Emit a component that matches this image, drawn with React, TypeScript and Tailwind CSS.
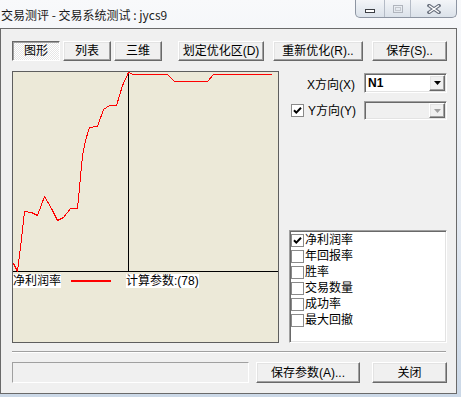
import React from 'react';

const ui = "font-[family-name:'Liberation_Sans','Noto_Sans_CJK_SC',sans-serif] text-[12px] leading-[14px] text-black";
const raised =
  'border border-t-white border-l-white border-r-[#696969] border-b-[#696969] shadow-[inset_-1px_-1px_0_#a0a0a0,inset_1px_1px_0_#e3e3e3] bg-[#f0f0f0]';
const sunken =
  'border border-t-[#a0a0a0] border-l-[#a0a0a0] border-r-white border-b-white shadow-[inset_1px_1px_0_#696969,inset_-1px_-1px_0_#e3e3e3]';

// chart points in window coordinates
const pts: [number, number][] = [
  [13, 263], [17, 271], [20, 247], [24, 211], [31, 212], [37, 215], [44, 196], [51, 208],
  [57, 220], [63, 217], [70, 208], [77, 208], [79, 187], [82, 155], [85, 140], [89, 127],
  [97, 126], [103, 109], [109, 105], [116, 105], [122, 85], [128, 72], [133, 74], [167, 74],
  [174, 81], [207, 81], [213, 74], [271, 74],
];

const metrics = ['净利润率', '年回报率', '胜率', '交易数量', '成功率', '最大回撤'];

function Check() {
  return (
    <svg width="9" height="9" viewBox="0 0 9 9">
      <path d="M1 4.2 L3.3 6.6 L8 1.8" fill="none" stroke="#000" strokeWidth="2" />
    </svg>
  );
}

function Box({ checked }: { checked?: boolean }) {
  return (
    <div className="w-[13px] h-[13px] shrink-0 border border-[#8a8a8a] bg-white flex items-center justify-center">
      {checked && <Check />}
    </div>
  );
}

function Btn({ w, ml, label, pressed }: { w: string; ml: string; label: string; pressed?: boolean }) {
  return (
    <div
      className={`${w} ${ml} h-full flex items-center justify-center ${
        pressed
          ? 'border border-t-[#696969] border-l-[#696969] border-r-white border-b-white shadow-[inset_1px_1px_0_#a0a0a0] bg-[repeating-conic-gradient(#ffffff_0_25%,#e6e6e6_0_50%)] bg-[length:2px_2px]'
          : raised
      }`}
    >
      <span className={ui}>{label}</span>
    </div>
  );
}

function Select({ value, disabled, h }: { value?: string; disabled?: boolean; h: string }) {
  return (
    <div className={`w-[83px] ${h} ${sunken} ${disabled ? 'bg-[#f0f0f0]' : 'bg-white'} flex items-center p-[1px]`}>
      <span className={`${ui} ml-[2px] font-bold flex-1`}>{value}</span>
      <div className={`w-[16px] h-full ${raised} flex items-center justify-center`}>
        <svg width="7" height="4" viewBox="0 0 7 4">
          <path d="M0 0 H7 L3.5 4 Z" fill={disabled ? '#a0a0a0' : '#000'} />
        </svg>
      </div>
    </div>
  );
}

export default function App() {
  const poly = pts.map(([x, y]) => `${x - 13 + 0.5},${y - 72 + 0.5}`).join(' ');

  return (
    <div className="w-[461px] h-[397px] flex flex-col bg-gradient-to-b from-[#f8f9fb] via-[#e6ebf2] to-[#cbd8e7] overflow-hidden">
      {/* title bar */}
      <div className="h-[28px] flex items-start shrink-0">
        <span className="ml-[1px] mt-[8px] font-[family-name:'Noto_Sans_CJK_SC',sans-serif] text-[12px] leading-[14px] text-[#1a1a1a]">
          交易测评 - 交易系统测试 : jycs9
        </span>
        <div className="ml-auto mr-[4px] h-[18px] flex border border-t-0 border-[#8d95a2] rounded-b-[5px] overflow-hidden bg-gradient-to-b from-[#f3f5f8] to-[#dbe2ea]">
          <div className="w-[28px] h-full flex items-end justify-center pb-[4px]">
            <div className="w-[10px] h-[4px] border border-[#3c3f44] bg-white" />
          </div>
          <div className="w-[26px] h-full border-l border-[#b4bbc6] flex items-center justify-center">
            <div className="w-[10px] h-[8px] border border-[#b0b5bd] flex items-center justify-center">
              <div className="w-[6px] h-[4px] border border-[#c4c8ce]" />
            </div>
          </div>
          <div className="w-[46px] h-full border-l border-[#b4bbc6] flex items-center justify-center">
            <svg width="14" height="10" viewBox="0 0 14 10">
              <path d="M2 1.5 L12 8.5 M12 1.5 L2 8.5" stroke="#6c7380" strokeWidth="3.4" strokeLinecap="square" />
              <path d="M2 1.5 L12 8.5 M12 1.5 L2 8.5" stroke="#ffffff" strokeWidth="1.4" />
            </svg>
          </div>
        </div>
      </div>

      {/* client area */}
      <div className="w-[457px] h-[366px] border border-[#6a6a6a] bg-[#f0f0f0] flex flex-col">
        <div className="flex h-[20px] mt-[12px] ml-[11px]">
          <Btn w="w-[48px]" ml="ml-0" label="图形" pressed />
          <Btn w="w-[48px]" ml="ml-[3px]" label="列表" />
          <Btn w="w-[48px]" ml="ml-[3px]" label="三维" />
          <Btn w="w-[86px]" ml="ml-[16px]" label="划定优化区(D)" />
          <Btn w="w-[90px]" ml="ml-[9px]" label="重新优化(R).." />
          <Btn w="w-[75px]" ml="ml-[9px]" label="保存(S).." />
        </div>

        <div className="flex h-[272px] mt-[10px] ml-[11px]">
          {/* chart */}
          <div className="w-[267px] h-full border border-[#5e5e5e] bg-[#ece9d8] flex flex-col">
            <svg width="265" height="200" viewBox="0 0 265 200" shapeRendering="crispEdges" className="block">
              <line x1="115.5" y1="0" x2="115.5" y2="200" stroke="#000" strokeWidth="1" />
              <line x1="0" y1="199.5" x2="265" y2="199.5" stroke="#000" strokeWidth="1" />
              <polyline points={poly} fill="none" stroke="#ff0000" strokeWidth="1" />
            </svg>
            <div className="flex items-center mt-[2px] h-[14px]">
              <span className={`${ui} bg-white`}>净利润率</span>
              <div className="ml-[10px] w-[40px] h-[2px] bg-[#ff0000]" />
              <span className={`${ui} bg-white ml-[15px]`}>计算参数:(78)</span>
            </div>
          </div>

          {/* right column */}
          <div className="ml-[10px] w-[158px] flex flex-col">
            <div className="mt-[2px] h-[20px] flex items-center">
              <div className="w-[75px] pr-[9px] text-right">
                <span className={ui}>X方向(X)</span>
              </div>
              <Select value="N1" h="h-[20px]" />
            </div>
            <div className="mt-[8px] h-[19px] flex items-center">
              <div className="ml-[2px]">
                <Box checked />
              </div>
              <span className={`${ui} ml-[4px]`}>Y方向(Y)</span>
              <div className="ml-auto">
                <Select disabled h="h-[19px]" />
              </div>
            </div>
            <div className={`mt-auto h-[113px] ${sunken} bg-white p-[1px] flex flex-col`}>
              {metrics.map((m, i) => (
                <div key={m} className="h-[16px] flex items-center">
                  <Box checked={i === 0} />
                  <span className={`${ui} ml-[1px]`}>{m}</span>
                </div>
              ))}
            </div>
          </div>
        </div>

        <div className="mt-[8px] ml-[11px] w-[434px] h-[2px] border-t border-t-[#a0a0a0] border-b border-b-white" />

        <div className="flex h-[21px] mt-[9px] ml-[11px]">
          <div className={`w-[237px] h-full ${sunken} shadow-none`} />
          <Btn w="w-[104px]" ml="ml-[7px]" label="保存参数(A)..." />
          <Btn w="w-[75px]" ml="ml-[12px]" label="关闭" />
        </div>
      </div>
    </div>
  );
}
